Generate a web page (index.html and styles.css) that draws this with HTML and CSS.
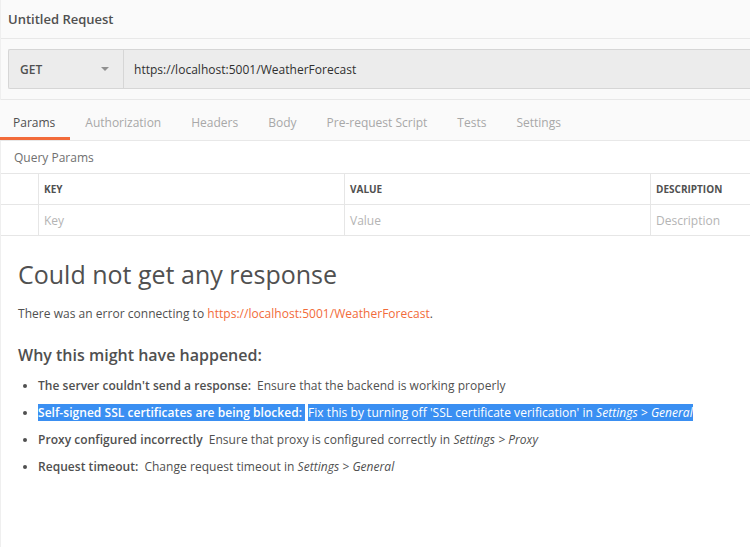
FILE: index.html
```html
<!DOCTYPE html>
<html lang="en">
<head>
    <meta charset="UTF-8">
    <title>Untitled Request</title>
    <link rel="stylesheet" href="styles.css">
</head>
<body>
    <div class="page">
        <div class="title-bar">Untitled Request</div>

        <div class="url-area">
            <div class="url-bar">
                <div class="method">
                    <span>GET</span>
                    <span class="caret"></span>
                </div>
                <div class="url">https://localhost:5001/WeatherForecast</div>
            </div>
        </div>

        <div class="tabs">
            <div class="tab active">Params</div>
            <div class="tab">Authorization</div>
            <div class="tab">Headers</div>
            <div class="tab">Body</div>
            <div class="tab">Pre-request Script</div>
            <div class="tab">Tests</div>
            <div class="tab">Settings</div>
        </div>

        <div class="section-label">Query Params</div>

        <div class="params-table">
            <div class="cell"></div>
            <div class="cell head">Key</div>
            <div class="cell head">Value</div>
            <div class="cell head">Description</div>
            <div class="cell"></div>
            <div class="cell placeholder">Key</div>
            <div class="cell placeholder">Value</div>
            <div class="cell placeholder">Description</div>
        </div>

        <div class="error">
            <h1>Could not get any response</h1>
            <p>There was an error connecting to <a href="#">https://localhost:5001/WeatherForecast</a>.</p>
            <h2>Why this might have happened:</h2>
            <ul>
                <li><strong>The server couldn't send a response:</strong>Ensure that the backend is working properly</li>
                <li><strong class="selected">Self-signed SSL certificates are being blocked:</strong><span class="selected">Fix this by turning off 'SSL certificate verification' in <em>Settings &gt; General</em></span></li>
                <li><strong>Proxy configured incorrectly</strong>Ensure that proxy is configured correctly in <em>Settings &gt; Proxy</em></li>
                <li><strong>Request timeout:</strong>Change request timeout in <em>Settings &gt; General</em></li>
            </ul>
        </div>
    </div>
</body>
</html>
```

FILE: styles.css
```css
body { margin: 0; font-family: "Open Sans", "Liberation Sans", sans-serif; color: #505050; background: #fff; width: 750px; height: 547px; overflow: hidden; }
.page { border-left: 1px solid #efefef; height: 547px; box-sizing: border-box; }

.title-bar { height: 38px; background: #fafafa; border-bottom: 1px solid #e8e8e8; display: flex; align-items: center; padding-left: 7px; font-size: 13px; font-weight: 600; }

.url-area { background: #fafafa; padding: 10px 0 10px 7px; border-bottom: 1px solid #e8e8e8; }
.url-bar { display: flex; height: 38px; background: #ececec; border: 1px solid #d6d6d6; border-right: none; border-radius: 2px 0 0 2px; }
.method { width: 115px; box-sizing: border-box; border-right: 1px solid #d6d6d6; display: flex; align-items: center; justify-content: space-between; padding: 0 14px 0 11px; font-size: 12px; font-weight: 600; color: #505050; }
.caret { width: 0; height: 0; border-left: 4px solid transparent; border-right: 4px solid transparent; border-top: 4px solid #909090; }
.url { display: flex; align-items: center; padding-left: 10px; font-size: 12px; color: #303030; letter-spacing: 0.02px; }

.tabs { display: flex; height: 40px; background: #fafafa; border-bottom: 1px solid #e8e8e8; margin-left: -1px; }
.tab { display: flex; align-items: center; padding: 5px 15px 0; font-size: 12px; color: #a8a8a8; box-sizing: border-box; }
.tab:first-child { padding-left: 13px; }
.tab.active { color: #505050; box-shadow: inset 0 -3px 0 #f26b3a; }

.section-label { height: 32px; display: flex; align-items: center; padding-left: 13px; font-size: 12px; color: #707070; }

.params-table { display: grid; grid-template-columns: 37px 306px 306px 1fr; border-top: 1px solid #e6e6e6; }
.cell { height: 30px; display: flex; align-items: center; padding-left: 5px; border-bottom: 1px solid #e6e6e6; font-size: 12px; white-space: nowrap; overflow: hidden; }
.cell + .cell { border-left: 1px solid #e6e6e6; }
.cell:nth-child(5) { border-left: none; }
.head { font-size: 10px; font-weight: 700; text-transform: uppercase; color: #505050; }
.placeholder { color: #b4b4b4; }

.error { padding: 0 17px; }
.error h1 { margin: 22px 0 0; font-size: 25px; font-weight: 400; line-height: 32px; }
.error p { margin: 15px 0 0; font-size: 12px; line-height: 18px; letter-spacing: 0.03px; }
.error a { color: #f26b3a; text-decoration: none; }
.error h2 { margin: 21px 0 0; font-size: 16px; font-weight: 600; line-height: 22px; }
.error ul { margin: 11px 0 0; padding-left: 20px; }
.error li { font-size: 12px; line-height: 18px; margin-bottom: 9px; letter-spacing: 0.04px; }
.error strong { font-weight: 600; margin-right: 6px; }
.error .selected { background: #3a8ff2; color: #fff; }
.error strong.selected { margin-right: 3px; padding-right: 3px; }
```
